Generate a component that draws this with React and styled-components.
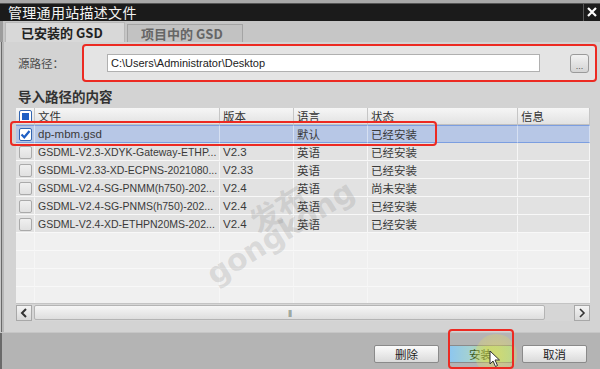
import React from 'react';
import styled, { createGlobalStyle } from 'styled-components';

const GlobalStyle = createGlobalStyle`
  html, body {
    margin: 0;
    padding: 0;
    background: #b4b4b4;
  }
  body {
    font-family: "Liberation Sans", "Noto Sans CJK SC", sans-serif;
    overflow: hidden;
  }
`

const Dialog = styled.div`
  position: relative;
  width: 600px;
  height: 369px;
  display: flex;
  flex-direction: column;
  overflow: hidden;
`

const TitleBar = styled.div`
  height: 18px;
  border-top: 3px solid #a9a9a9;
  box-shadow: inset 0 1px 0 #555;
  background: #1b1b1b;
  display: flex;
  align-items: center;
  justify-content: space-between;
  padding-left: 8px;
`

const Title = styled.span`
  color: #f4f4f4;
  font-family: "Noto Sans CJK SC", sans-serif;
  font-size: 14px;
  letter-spacing: 0.3px;
  line-height: 18px;
`

const CloseBox = styled.div`
  width: 16px;
  height: 18px;
  border-left: 1px solid #555;
  display: flex;
  align-items: center;
  justify-content: center;
`

const TabStrip = styled.div`
  height: 21px;
  background: #c6c6c6;
  display: flex;
  align-items: flex-end;
  padding-left: 5px;
  gap: 2px;
  box-shadow: inset 3px 0 0 #9c9c9c;
`

const Tab = styled.div`
  height: ${p => (p.active ? '20px' : '18px')};
  width: ${p => p.w}px;
  box-sizing: border-box;
  background: ${p => (p.active ? '#d8d8d8' : '#c2c2c2')};
  border: 1px solid ${p => (p.active ? '#b8b8b8' : '#a4a4a4')};
  border-bottom: none;
  color: ${p => (p.active ? '#222' : '#666')};
  font-family: "Noto Sans CJK SC", sans-serif;
  font-weight: bold;
  font-size: 13px;
  display: flex;
  align-items: center;
  padding-left: ${p => (p.active ? 15 : 13)}px;
`

const Body = styled.div`
  flex: 1;
  background: #d3d3d3;
  padding: 2px 3px 0 0;
  display: flex;
  flex-direction: column;
  box-shadow: inset 1px 0 0 #c8c8c8, inset 2px 0 0 #6a6a6a, inset 4px 0 0 #b8b8b8;
`

const SourceRow = styled.div`
  display: flex;
  align-items: center;
  padding-left: 18px;
`

const Label = styled.span`
  width: 64px;
  color: #4a4a4a;
  font-family: "Noto Sans CJK SC", sans-serif;
  font-size: 11.5px;
`

const Highlight = styled.div`
  width: 515px;
  height: 38px;
  box-sizing: border-box;
  border: 2px solid #ec2a22;
  border-radius: 4px;
  background: #e4e4e4;
  display: flex;
  align-items: center;
  padding: 0 6px 0 23px;
  justify-content: space-between;
`

const PathInput = styled.div`
  width: 433px;
  height: 18px;
  box-sizing: border-box;
  background: #fff;
  border: 1px solid #b0b0b0;
  font-size: 11px;
  color: #222;
  display: flex;
  align-items: center;
  padding-left: 3px;
`

const Browse = styled.div`
  width: 19px;
  height: 19px;
  box-sizing: border-box;
  border: 1px solid #9a9a9a;
  border-radius: 3px;
  background: linear-gradient(#f2f2f2, #d4d4d4);
  font-size: 9px;
  color: #555;
  display: flex;
  align-items: flex-end;
  justify-content: center;
  line-height: 12px;
`

const Heading = styled.div`
  height: 22px;
  margin-top: 4px;
  padding-left: 18px;
  font-family: "Noto Sans CJK SC", sans-serif;
  font-size: 13.5px;
  font-weight: bold;
  color: #333;
  line-height: 20px;
`

const TableWrap = styled.div`
  position: relative;
  margin-left: 16px;
  width: 574px;
`

const Grid = styled.div`
  display: grid;
  grid-template-columns: 19px 185px 74px 74px 150px 72px;
`

const HeadCell = styled.div`
  height: 17px;
  box-sizing: border-box;
  background: linear-gradient(#f6f6f6, #e2e2e2);
  border-right: 1px solid #c6c6c6;
  border-bottom: 1px solid #c0c0c0;
  font-family: "Noto Sans CJK SC", sans-serif;
  font-size: 11.5px;
  color: #333;
  display: flex;
  align-items: center;
  padding-left: 3px;
`

const Rows = styled.div`
  height: 178px;
  overflow: hidden;
  background: #f0f0f0;
`

const Cell = styled.div`
  height: 18px;
  box-sizing: border-box;
  background: ${p => (p.sel ? '#b7c7e6' : p.empty ? '#f0f0f0' : '#e2e2e2')};
  border-right: 1px solid ${p => (p.sel ? '#d6e0f2' : '#f6f6f6')};
  border-top: 1px solid ${p => (p.sel ? '#7c9ee0' : 'transparent')};
  border-bottom: 1px solid ${p => (p.sel ? '#7c9ee0' : '#f8f8f8')};
  font-family: "Liberation Sans", "Noto Sans CJK SC", sans-serif;
  font-size: ${p => (p.small ? '10.5px' : '11.5px')};
  color: #3a3a3a;
  display: flex;
  align-items: center;
  padding-left: 3px;
  white-space: nowrap;
  overflow: hidden;
`

const Check = styled.div`
  width: 13px;
  height: 13px;
  box-sizing: border-box;
  border: 1px solid ${p => (p.blue ? '#3466b0' : '#aaaaaa')};
  background: ${p => (p.blue ? '#fff' : 'linear-gradient(#f0f0f0, #e0e0e0)')};
  border-radius: 2px;
  display: flex;
  align-items: center;
  justify-content: center;
`

const Indeterminate = styled.div`
  width: 7px;
  height: 7px;
  background: #1f5fc4;
`

const RowMark = styled.div`
  position: absolute;
  left: -6px;
  top: 13px;
  width: 427px;
  height: 25px;
  box-sizing: border-box;
  border: 2px solid #ec2a22;
  border-radius: 4px;
  pointer-events: none;
`

const Scrollbar = styled.div`
  height: 17px;
  display: flex;
  align-items: center;
  background: #d6d6d6;
  border-top: 1px solid #c4c4c4;
`

const ArrowBtn = styled.div`
  width: 16px;
  height: 16px;
  box-sizing: border-box;
  border: 1px solid #a8a8a8;
  background: linear-gradient(#f4f4f4, #d8d8d8);
  display: flex;
  align-items: center;
  justify-content: center;
`

const Track = styled.div`
  margin-left: 2px;
  width: 511px;
  height: 15px;
  box-sizing: border-box;
  border: 1px solid #b4b4b4;
  border-radius: 2px;
  background: linear-gradient(#f6f6f6, #dedede);
  display: flex;
  align-items: center;
  justify-content: center;
  font-size: 8px;
  color: #777;
  letter-spacing: -1px;
  margin-right: 29px;
`

const Footer = styled.div`
  height: 37px;
  background: #b4b4b4;
  display: flex;
  justify-content: flex-end;
  align-items: flex-start;
  padding: 12px 13px 0 0;
  box-sizing: border-box;
  gap: 9px;
  border-top: 1px solid #c6c6c6;
  box-shadow: inset 2px 0 0 #6a6a6a;
`

const Button = styled.div`
  position: relative;
  width: 65px;
  height: 18px;
  box-sizing: border-box;
  border: 1px solid #8a8a8a;
  border-radius: 2px;
  background: ${p => (p.hot
    ? 'linear-gradient(90deg, #8cc6f0 0%, #a6d2d0 35%, #b8d484 60%, #a8d4a0 100%)'
    : 'linear-gradient(#fbfbfb, #dadada)')};
  font-family: "Noto Sans CJK SC", sans-serif;
  font-size: 11.5px;
  color: ${p => (p.hot ? '#3c5a22' : '#222')};
  display: flex;
  align-items: center;
  justify-content: center;
`

const Glow = styled.div`
  position: absolute;
  left: 26px;
  top: -12px;
  width: 42px;
  height: 42px;
  border-radius: 50%;
  background: radial-gradient(rgba(232, 222, 90, 0.55), rgba(232, 222, 90, 0.25) 70%, rgba(232, 222, 90, 0) 100%);
  pointer-events: none;
`

const BtnMark = styled.div`
  position: absolute;
  left: -1px;
  top: -17px;
  width: 66px;
  height: 40px;
  box-sizing: border-box;
  border: 2px solid #ec2a22;
  border-radius: 4px;
  pointer-events: none;
`

const Cursor = styled.svg`
  position: absolute;
  left: 40px;
  top: 4px;
`

const Watermark = styled.div`
  position: absolute;
  left: ${p => p.x}px;
  top: ${p => p.y}px;
  transform: rotate(${p => p.r}deg);
  transform-origin: left top;
  font-family: ${p => (p.cjk ? '"Noto Sans CJK SC", sans-serif' : '"DejaVu Sans", sans-serif')};
  font-weight: bold;
  font-size: ${p => p.size}px;
  color: rgba(120, 120, 120, 0.2);
  pointer-events: none;
  white-space: nowrap;
`

const files = [
  { name: 'dp-mbm.gsd', ver: '', lang: '默认', state: '已经安装', sel: true },
  { name: 'GSDML-V2.3-XDYK-Gateway-ETHP...', ver: 'V2.3', lang: '英语', state: '已经安装' },
  { name: 'GSDML-V2.33-XD-ECPNS-2021080...', ver: 'V2.33', lang: '英语', state: '已经安装' },
  { name: 'GSDML-V2.4-SG-PNMM(h750)-202...', ver: 'V2.4', lang: '英语', state: '尚未安装' },
  { name: 'GSDML-V2.4-SG-PNMS(h750)-202...', ver: 'V2.4', lang: '英语', state: '已经安装' },
  { name: 'GSDML-V2.4-XD-ETHPN20MS-202...', ver: 'V2.4', lang: '英语', state: '已经安装' },
]

const CheckMark = () => (
  <svg width="11" height="11" viewBox="0 0 11 11">
    <path d="M1.5 5.5 L4.3 8.3 L9.5 2" stroke="#1f5fc4" strokeWidth="2.2" fill="none" />
  </svg>
)

export default function App() {
  const empties = [0, 1, 2, 3]
  return (
    <Dialog>
      <GlobalStyle />
      <TitleBar>
        <Title>管理通用站描述文件</Title>
        <CloseBox>
          <svg width="12" height="12" viewBox="0 0 12 12">
            <path d="M2 2 L10 10 M10 2 L2 10" stroke="#fff" strokeWidth="2.2" />
          </svg>
        </CloseBox>
      </TitleBar>
      <TabStrip>
        <Tab active w={120}>已安装的 GSD</Tab>
        <Tab w={116}>项目中的 GSD</Tab>
      </TabStrip>
      <Body>
        <SourceRow>
          <Label>源路径：</Label>
          <Highlight>
            <PathInput>C:\Users\Administrator\Desktop</PathInput>
            <Browse>...</Browse>
          </Highlight>
        </SourceRow>
        <Heading>导入路径的内容</Heading>
        <TableWrap>
          <Grid>
            <HeadCell><Check blue><Indeterminate /></Check></HeadCell>
            <HeadCell>文件</HeadCell>
            <HeadCell>版本</HeadCell>
            <HeadCell>语言</HeadCell>
            <HeadCell>状态</HeadCell>
            <HeadCell>信息</HeadCell>
          </Grid>
          <Rows>
            <Grid>
              {files.map((f, i) => (
                <React.Fragment key={i}>
                  <Cell sel={f.sel}>
                    {f.sel ? <Check blue><CheckMark /></Check> : <Check />}
                  </Cell>
                  <Cell sel={f.sel} small={!f.sel}>{f.name}</Cell>
                  <Cell sel={f.sel}>{f.ver}</Cell>
                  <Cell sel={f.sel}>{f.lang}</Cell>
                  <Cell sel={f.sel}>{f.state}</Cell>
                  <Cell sel={f.sel} />
                </React.Fragment>
              ))}
              {empties.map(i => (
                <React.Fragment key={'e' + i}>
                  <Cell empty />
                  <Cell empty />
                  <Cell empty />
                  <Cell empty />
                  <Cell empty />
                  <Cell empty />
                </React.Fragment>
              ))}
            </Grid>
          </Rows>
          <Scrollbar>
            <ArrowBtn>
              <svg width="8" height="10" viewBox="0 0 8 10">
                <path d="M6 1 L2 5 L6 9" stroke="#333" strokeWidth="2" fill="none" />
              </svg>
            </ArrowBtn>
            <Track>|||</Track>
            <ArrowBtn>
              <svg width="8" height="10" viewBox="0 0 8 10">
                <path d="M2 1 L6 5 L2 9" stroke="#333" strokeWidth="1.6" fill="none" />
              </svg>
            </ArrowBtn>
          </Scrollbar>
          <RowMark />
        </TableWrap>
      </Body>
      <Footer>
        <Button>删除</Button>
        <Button hot>
          安装
          <Glow />
          <Cursor width="12" height="18" viewBox="0 0 12 18">
            <path d="M1 1 L1 14 L4 11 L6.5 16.5 L8.5 15.5 L6 10 L10.5 10 Z" fill="#fff" stroke="#333" strokeWidth="1" />
          </Cursor>
          <BtnMark />
        </Button>
        <Button>取消</Button>
      </Footer>
      <Watermark cjk x={240} y={205} r={-32} size={30}>发布</Watermark>
      <Watermark x={200} y={262} r={-32} size={30}>gongkong</Watermark>
    </Dialog>
  );
}
